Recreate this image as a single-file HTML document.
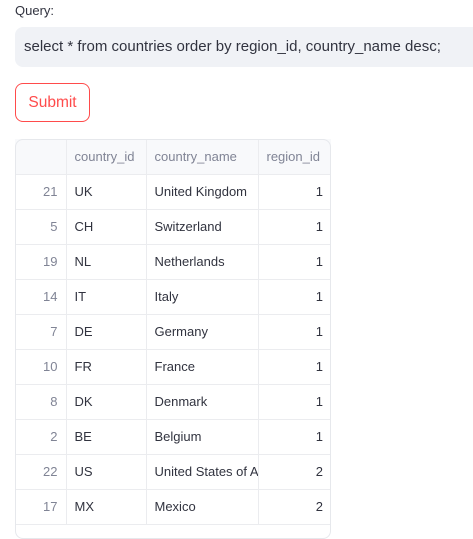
<!DOCTYPE html>
<html><head><style>
body{margin:0;width:473px;height:508px;overflow:hidden;background:#fff;font-family:"Liberation Sans",sans-serif;color:#31333f;position:relative}
.lbl{position:absolute;left:15px;top:3px;font-size:13px}
.inp{position:absolute;left:15px;top:27px;width:470px;height:40px;background:#f0f2f6;border-radius:8px;font-size:15px;line-height:40px;padding-left:9px;white-space:nowrap;box-sizing:border-box}
.btn{position:absolute;left:15px;top:83px;width:75px;height:39px;border:1px solid #ff4b4b;border-radius:8px;box-sizing:border-box;color:#ff4b4b;font-size:15.5px;line-height:37px;text-align:center}
table{position:absolute;left:15px;top:139px;width:316px;border-collapse:collapse;font-size:13px;table-layout:fixed}
.wrap{position:absolute;left:15px;top:139px;width:316px;height:400px;border:1px solid #e6e8ec;border-radius:8px;box-sizing:border-box}
td,th{height:35px;border:1px solid #ebecef;padding:0 8px;white-space:nowrap;overflow:hidden;box-sizing:border-box}
th{background:#f8f9fb;color:#808495;font-weight:normal;text-align:left}
td.i{text-align:right;color:#808495}
td.r{text-align:right}
tr>*:first-child{border-left:none}
tr>*:last-child{border-right:none}
thead th{border-top:none}
</style></head><body>
<div class="lbl">Query:</div>
<div class="inp">select * from countries order by region_id, country_name desc;</div>
<div class="btn">Submit</div>
<table>
<colgroup><col style="width:51px"><col style="width:80px"><col style="width:112px"><col style="width:73px"></colgroup>
<thead><tr><th></th><th>country_id</th><th>country_name</th><th>region_id</th></tr></thead>
<tbody>
<tr><td class="i">21</td><td>UK</td><td>United Kingdom</td><td class="r">1</td></tr>
<tr><td class="i">5</td><td>CH</td><td>Switzerland</td><td class="r">1</td></tr>
<tr><td class="i">19</td><td>NL</td><td>Netherlands</td><td class="r">1</td></tr>
<tr><td class="i">14</td><td>IT</td><td>Italy</td><td class="r">1</td></tr>
<tr><td class="i">7</td><td>DE</td><td>Germany</td><td class="r">1</td></tr>
<tr><td class="i">10</td><td>FR</td><td>France</td><td class="r">1</td></tr>
<tr><td class="i">8</td><td>DK</td><td>Denmark</td><td class="r">1</td></tr>
<tr><td class="i">2</td><td>BE</td><td>Belgium</td><td class="r">1</td></tr>
<tr><td class="i">22</td><td>US</td><td style="padding-right:0">United States of America</td><td class="r">2</td></tr>
<tr><td class="i">17</td><td>MX</td><td>Mexico</td><td class="r">2</td></tr>
</tbody></table>
<div class="wrap"></div>
</body></html>
